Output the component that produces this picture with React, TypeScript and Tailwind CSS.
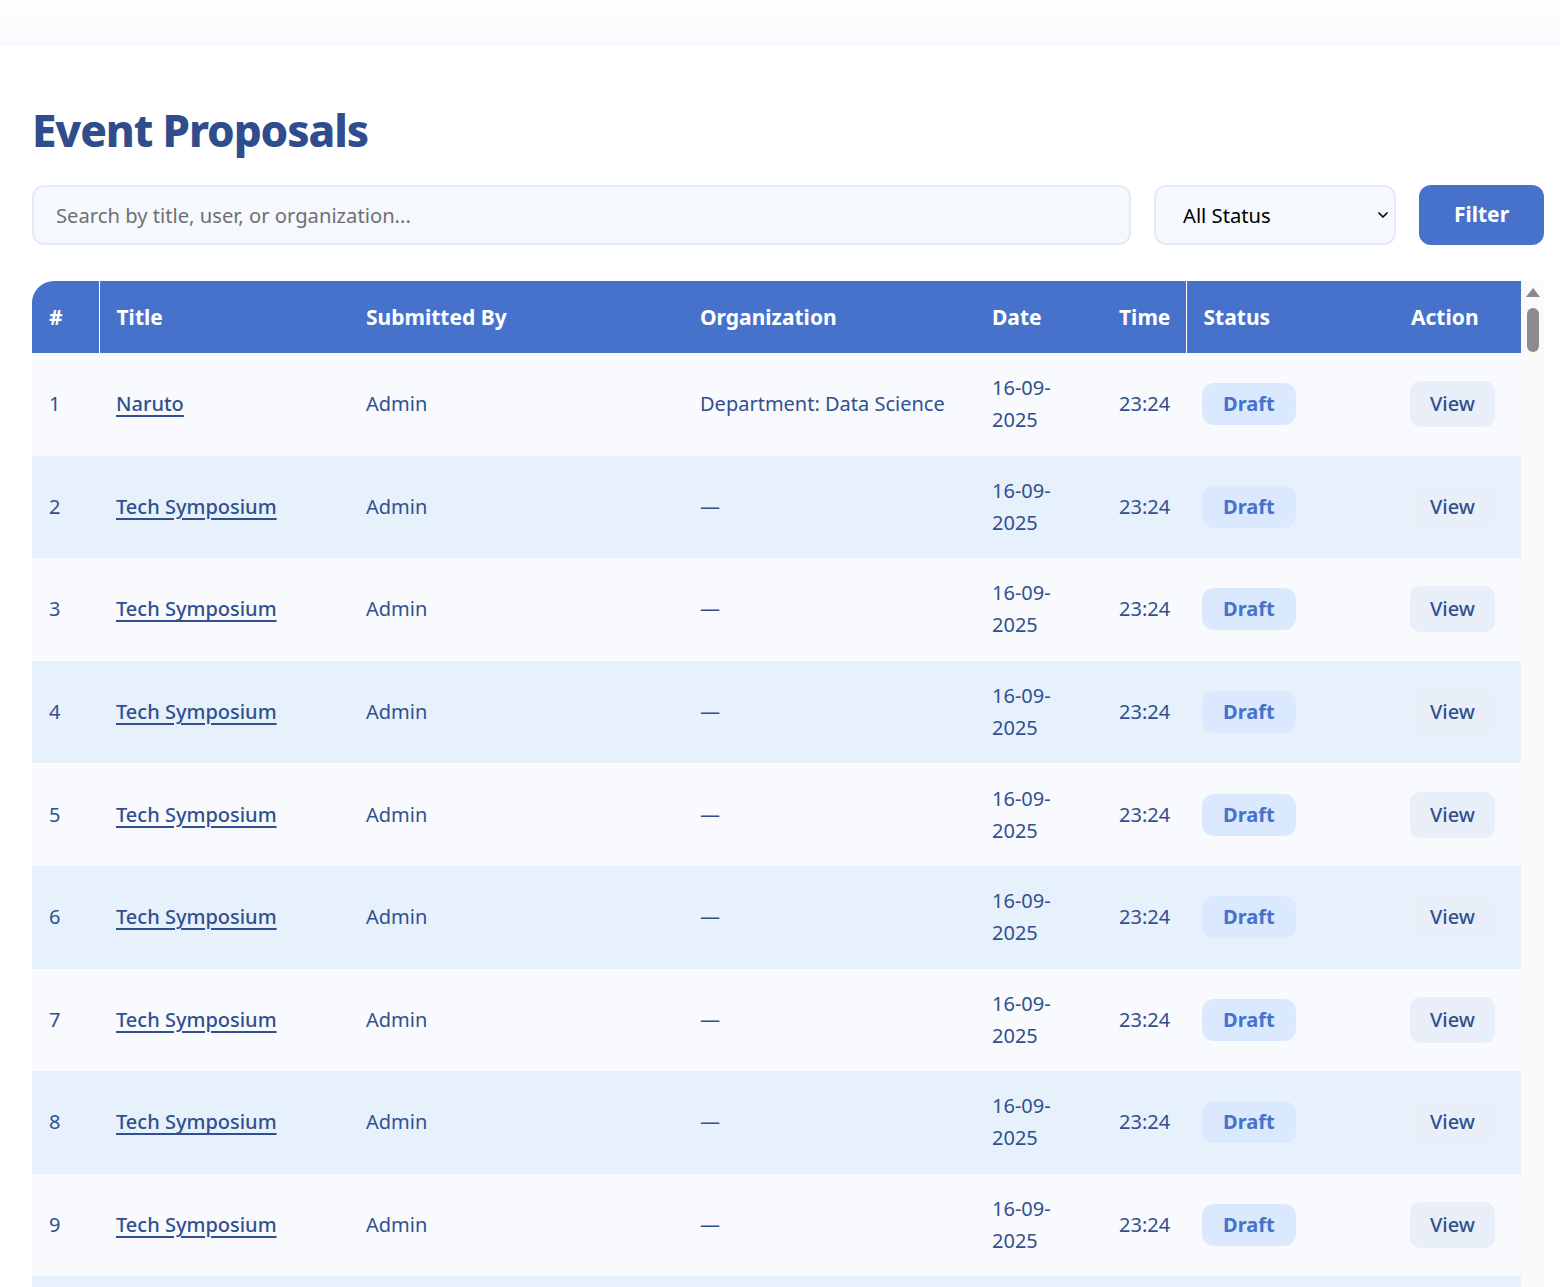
import { ChevronDown } from "lucide-react";

type Proposal = {
  id: number;
  title: string;
  submittedBy: string;
  organization: string;
  date: string;
  time: string;
  status: string;
};

const proposals: Proposal[] = [
  { id: 1, title: "Naruto", submittedBy: "Admin", organization: "Department: Data Science", date: "16-09-2025", time: "23:24", status: "Draft" },
  ...Array.from({ length: 9 }, (_, i) => ({
    id: i + 2,
    title: "Tech Symposium",
    submittedBy: "Admin",
    organization: "—",
    date: "16-09-2025",
    time: "23:24",
    status: "Draft",
  })),
];

export default function App() {
  return (
    <div className="min-h-screen bg-white font-['Noto_Sans',sans-serif] text-[#31508f]">
      {/* top bar */}
      <div className="h-[45px] bg-gradient-to-b from-white to-[#f7f9fc]" />

      <div className="pl-[32px] pr-[16px]">
        <h1 className="mt-[57px] text-[44px] leading-[56px] font-extrabold tracking-[-0.025em] text-[#2f4d8c]">
          Event Proposals
        </h1>

        {/* filters */}
        <div className="mt-[27px] flex gap-[23px]">
          <input
            type="text"
            placeholder="Search by title, user, or organization..."
            className="h-[60px] flex-1 rounded-[12px] border-2 border-[#e2ebf9] bg-[#f5f8fd] px-[22px] text-[20.2px] text-[#31508f] placeholder:text-[#707070] outline-none"
          />
          <div className="relative w-[242px]">
            <select className="h-[60px] w-full appearance-none rounded-[12px] border-2 border-[#e2ebf9] bg-[#f5f8fd] pl-[27px] text-[20.2px] text-black outline-none">
              <option>All Status</option>
              <option>Draft</option>
              <option>Submitted</option>
              <option>Approved</option>
            </select>
            <ChevronDown
              size={16}
              strokeWidth={2.5}
              className="pointer-events-none absolute right-[5px] top-1/2 -translate-y-1/2 text-black"
            />
          </div>
          <button className="h-[60px] w-[125px] rounded-[12px] bg-[#4672cc] text-[21px] font-bold text-white">
            Filter
          </button>
        </div>

        {/* table */}
        <div className="mt-[36px] flex">
          <div className="flex-1 overflow-hidden rounded-tl-[22px]">
            <table className="w-full table-fixed border-collapse text-[20px] leading-[32px]">
              <colgroup>
                <col className="w-[67px]" />
                <col className="w-[250px]" />
                <col className="w-[334px]" />
                <col className="w-[292px]" />
                <col className="w-[127px]" />
                <col className="w-[84px]" />
                <col className="w-[208px]" />
                <col />
              </colgroup>
              <thead>
                <tr className="h-[72px] bg-[#4672cc] text-left text-[21px] font-bold text-white">
                  <th className="px-[17px]">#</th>
                  <th className="border-l-[1.5px] border-white px-[17px]">Title</th>
                  <th className="px-[17px]">Submitted By</th>
                  <th className="px-[17px]">Organization</th>
                  <th className="px-[17px]">Date</th>
                  <th className="px-[17px]">Time</th>
                  <th className="border-l-[1.5px] border-white px-[17px]">Status</th>
                  <th className="px-[17px]">Action</th>
                </tr>
              </thead>
              <tbody>
                {proposals.map((p, i) => (
                  <tr key={p.id} className={i % 2 === 0 ? "bg-[#f8fafd]" : "bg-[#e7f1fc]"}>
                    <td className="px-[17px] py-[19.3px]">{p.id}</td>
                    <td className="px-[17px] py-[19.3px]">
                      <a href="#" className="font-medium underline decoration-2 underline-offset-[4px]">
                        {p.title}
                      </a>
                    </td>
                    <td className="px-[17px] py-[19.3px]">{p.submittedBy}</td>
                    <td className="px-[17px] py-[19.3px]">{p.organization}</td>
                    <td className="px-[17px] py-[19.3px]">{p.date}</td>
                    <td className="px-[17px] py-[19.3px]">{p.time}</td>
                    <td className="px-[16px] py-[19.3px]">
                      <span className="inline-block rounded-[12px] bg-[#dbe9fe] px-[21px] py-[5px] font-bold text-[#4672cc]">
                        {p.status}
                      </span>
                    </td>
                    <td className="px-[16px] py-[19.3px]">
                      <button className="rounded-[10px] bg-[#e9eff9] px-[20px] py-[7px] font-medium text-[#31508f]">
                        View
                      </button>
                    </td>
                  </tr>
                ))}
              </tbody>
            </table>
          </div>

          {/* scrollbar */}
          <div className="flex w-[23px] flex-col items-center bg-[#fafafa] pt-[7px]">
            <div className="h-0 w-0 border-x-[7px] border-b-[9px] border-x-transparent border-b-[#8a8a8a]" />
            <div className="mt-[11px] h-[44px] w-[12px] rounded-full bg-[#8c8c8c]" />
          </div>
        </div>
      </div>
    </div>
  );
}
